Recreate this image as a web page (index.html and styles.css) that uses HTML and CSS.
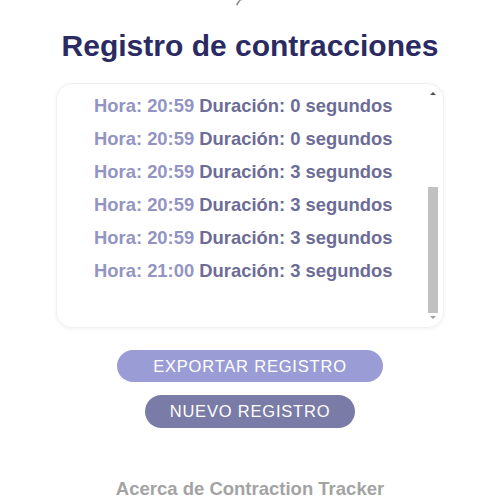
FILE: index.html
```html
<!DOCTYPE html>
<html lang="es">
<head>
<meta charset="utf-8">
<link rel="stylesheet" href="styles.css">
</head>
<body>
<div class="page">
  <div class="top-icon">
    <svg width="20" height="8" viewBox="0 0 20 8"><path d="M3 7 L6 2 L10 1 M6 2 L3 6" stroke="#8a8a8a" stroke-width="1.3" fill="none" stroke-linecap="round"/></svg>
  </div>
  <h1 class="title">Registro de contracciones</h1>
  <div class="log">
    <ul class="entries">
      <li><span class="hora">Hora: 20:59</span> <span class="dur">Duración: 0 segundos</span></li>
      <li><span class="hora">Hora: 20:59</span> <span class="dur">Duración: 0 segundos</span></li>
      <li><span class="hora">Hora: 20:59</span> <span class="dur">Duración: 3 segundos</span></li>
      <li><span class="hora">Hora: 20:59</span> <span class="dur">Duración: 3 segundos</span></li>
      <li><span class="hora">Hora: 20:59</span> <span class="dur">Duración: 3 segundos</span></li>
      <li><span class="hora">Hora: 21:00</span> <span class="dur">Duración: 3 segundos</span></li>
    </ul>
    <div class="scrollbar">
      <div class="arrow up"></div>
      <div class="track"><div class="thumb"></div></div>
      <div class="arrow down"></div>
    </div>
  </div>
  <button class="btn export">EXPORTAR REGISTRO</button>
  <button class="btn nuevo">NUEVO REGISTRO</button>
  <div class="about">Acerca de Contraction Tracker</div>
</div>
</body>
</html>
```
FILE: styles.css
```css
html, body {
  margin: 0;
  padding: 0;
  background: #ffffff;
}
.page {
  width: 500px;
  height: 500px;
  display: flex;
  flex-direction: column;
  align-items: center;
  font-family: "Liberation Sans", Arial, sans-serif;
}
.top-icon {
  height: 8px;
  width: 20px;
  margin-left: -12px;
  margin-top: -2px;
  line-height: 0;
}
.title {
  margin: 25px 0 0 0;
  font-size: 30px;
  line-height: 30px;
  font-weight: bold;
  color: #2b2b63;
}
.log {
  margin-top: 22px;
  width: 386px;
  height: 246px;
  border: 1px solid #f0f0f0;
  border-radius: 16px;
  box-shadow: 0 1px 4px rgba(0,0,0,0.06);
  display: flex;
  overflow: hidden;
}
.entries {
  flex: 1;
  list-style: none;
  margin: 0;
  padding: 5px 0 0 37px;
}
.entries li {
  font-size: 18.4px;
  font-weight: bold;
  line-height: 33px;
  white-space: nowrap;
}
.hora { color: #9394c3; }
.dur { color: #6c6c96; }
.scrollbar {
  width: 10px;
  margin: 4px 5px 4px 0;
  display: flex;
  flex-direction: column;
}
.arrow {
  height: 10px;
  display: flex;
  justify-content: center;
  align-items: center;
}
.arrow.up::before {
  content: "";
  border-left: 3px solid transparent;
  border-right: 3px solid transparent;
  border-bottom: 3px solid #505050;
}
.arrow.down::before {
  content: "";
  border-left: 3px solid transparent;
  border-right: 3px solid transparent;
  border-top: 3px solid #a0a0a0;
}
.track {
  flex: 1;
  display: flex;
  flex-direction: column;
  justify-content: flex-end;
}
.thumb {
  height: 126px;
  background: #c1c1c1;
}
.btn {
  border: none;
  color: #ffffff;
  font-family: "Liberation Sans", Arial, sans-serif;
  font-size: 16.5px;
  letter-spacing: 0.8px;
  height: 33px;
  border-radius: 17px;
  padding: 0;
}
.export {
  margin-top: 22px;
  width: 266px;
  background: #9a9dd5;
}
.nuevo {
  margin-top: 13px;
  width: 210px;
  background: #7a7ba6;
}
.about {
  margin-top: 50px;
  font-size: 18.5px;
  font-weight: bold;
  color: #a3a3a3;
}
```
